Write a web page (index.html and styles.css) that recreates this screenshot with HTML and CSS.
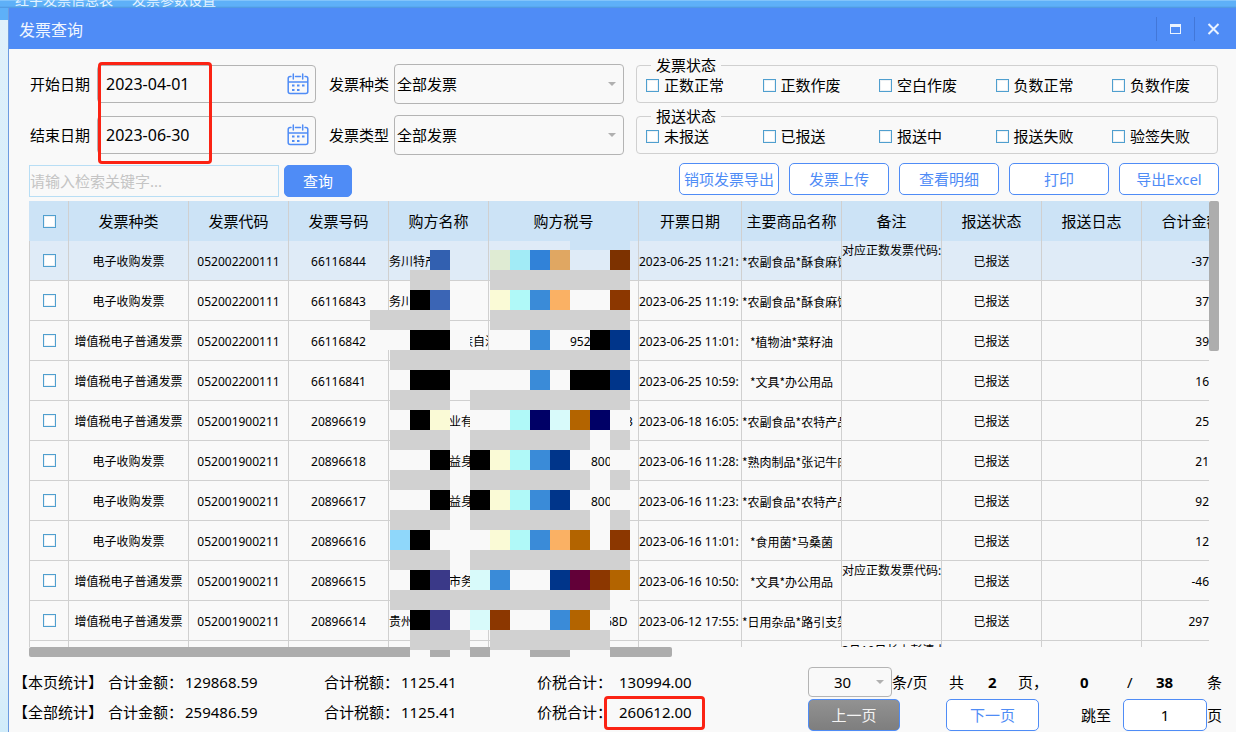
FILE: index.html
```html
<!DOCTYPE html>
<html lang="zh-CN">
<head>
<meta charset="utf-8">
<title>发票查询</title>
<link rel="stylesheet" href="styles.css">
</head>
<body>
<div class="desktop">
  <div class="backbar"><span>红字发票信息表</span><span>发票参数设置</span></div>
  <main class="window">
    <header class="titlebar">
      <h1>发票查询</h1>
      <button class="winbtn" aria-label="最大化"><svg width="13" height="12" viewBox="0 0 13 12"><rect x="1.5" y="1.500" width="10" height="9" fill="none" stroke="#eaf3ff"/><rect x="1" y="1" width="11" height="3" fill="#eaf3ff"/></svg></button>
      <button class="winbtn" aria-label="关闭"><svg width="13" height="12" viewBox="0 0 13 12"><path d="M1.500 1 11.500 11M11.500 1 1.500 11" stroke="#eaf3ff" stroke-width="2"/></svg></button>
    </header>

    <form class="filters">
      <label for="start">开始日期</label>
      <div class="datebox"><input id="start" type="text" value="2023-04-01"><svg class="cal" width="22" height="22" viewBox="0 0 22 22"><use href="#calendar"/></svg></div>
      <label class="second" for="kind">发票种类</label>
      <div class="pick"><select id="kind"><option>全部发票</option></select></div>
      <fieldset>
        <legend>发票状态</legend>
        <div class="checks">
          <label><input type="checkbox">正数正常</label>
          <label><input type="checkbox">正数作废</label>
          <label><input type="checkbox">空白作废</label>
          <label><input type="checkbox">负数正常</label>
          <label><input type="checkbox">负数作废</label>
        </div>
      </fieldset>
      <label for="end">结束日期</label>
      <div class="datebox"><input id="end" type="text" value="2023-06-30"><svg class="cal" width="22" height="22" viewBox="0 0 22 22"><use href="#calendar"/></svg></div>
      <label class="second" for="type">发票类型</label>
      <div class="pick"><select id="type"><option>全部发票</option></select></div>
      <fieldset>
        <legend>报送状态</legend>
        <div class="checks">
          <label><input type="checkbox">未报送</label>
          <label><input type="checkbox">已报送</label>
          <label><input type="checkbox">报送中</label>
          <label><input type="checkbox">报送失败</label>
          <label><input type="checkbox">验签失败</label>
        </div>
      </fieldset>
    </form>

    <div class="toolbar">
      <input class="search" type="text" placeholder="请输入检索关键字..." aria-label="检索关键字">
      <button class="btn primary">查询</button>
      <div class="actions">
        <button class="btn">销项发票导出</button>
        <button class="btn">发票上传</button>
        <button class="btn">查看明细</button>
        <button class="btn">打印</button>
        <button class="btn">导出Excel</button>
      </div>
    </div>

    <section class="grid">
      <div class="viewport">
        <table>
          <colgroup><col class="c40"><col class="c120"><col class="c100"><col class="c100"><col class="c100"><col class="c150"><col class="c103"><col class="c100"><col class="c100"><col class="c100"><col class="c100"><col class="c100"></colgroup>
          <thead>
            <tr><th><input type="checkbox" aria-label="全选"></th><th>发票种类</th><th>发票代码</th><th>发票号码</th><th>购方名称</th><th>购方税号</th><th>开票日期</th><th>主要商品名称</th><th>备注</th><th>报送状态</th><th>报送日志</th><th>合计金额</th></tr>
          </thead>
          <tbody>
            <tr class="selected"><td><input type="checkbox" aria-label="选择"></td><td>电子收购发票</td><td>052002200111</td><td>66116844</td><td class="start">务川特产</td><td></td><td class="start">2023-06-25 11:21:</td><td class="goods">*农副食品*酥食麻饼</td><td class="note">对应正数发票代码:0</td><td>已报送</td><td></td><td class="sum">-37</td></tr>
            <tr><td><input type="checkbox" aria-label="选择"></td><td>电子收购发票</td><td>052002200111</td><td>66116843</td><td class="start">务川</td><td></td><td class="start">2023-06-25 11:19:</td><td class="goods">*农副食品*酥食麻饼</td><td></td><td>已报送</td><td></td><td class="sum">37</td></tr>
            <tr><td><input type="checkbox" aria-label="选择"></td><td>增值税电子普通发票</td><td>052002200111</td><td>66116842</td><td class="start name-tail">族自治</td><td class="start tax-mid">952</td><td class="start">2023-06-25 11:01:</td><td class="goods">*植物油*菜籽油</td><td></td><td>已报送</td><td></td><td class="sum">39</td></tr>
            <tr><td><input type="checkbox" aria-label="选择"></td><td>增值税电子普通发票</td><td>052002200111</td><td>66116841</td><td></td><td></td><td class="start">2023-06-25 10:59:</td><td class="goods">*文具*办公用品</td><td></td><td>已报送</td><td></td><td class="sum">16</td></tr>
            <tr><td><input type="checkbox" aria-label="选择"></td><td>增值税电子普通发票</td><td>052001900211</td><td>20896619</td><td class="start name-mid">业有</td><td class="start tax-last">3</td><td class="start">2023-06-18 16:05:</td><td class="goods">*农副食品*农特产品</td><td></td><td>已报送</td><td></td><td class="sum">25</td></tr>
            <tr><td><input type="checkbox" aria-label="选择"></td><td>电子收购发票</td><td>052001900211</td><td>20896618</td><td class="start name-mid">益身</td><td class="start tax-late">800</td><td class="start">2023-06-16 11:28:</td><td class="goods">*熟肉制品*张记牛肉</td><td></td><td>已报送</td><td></td><td class="sum">21</td></tr>
            <tr><td><input type="checkbox" aria-label="选择"></td><td>电子收购发票</td><td>052001900211</td><td>20896617</td><td class="start name-mid">益身</td><td class="start tax-late">800</td><td class="start">2023-06-16 11:23:</td><td class="goods">*农副食品*农特产品</td><td></td><td>已报送</td><td></td><td class="sum">92</td></tr>
            <tr><td><input type="checkbox" aria-label="选择"></td><td>电子收购发票</td><td>052001900211</td><td>20896616</td><td></td><td></td><td class="start">2023-06-16 11:01:</td><td class="goods">*食用菌*马桑菌</td><td></td><td>已报送</td><td></td><td class="sum">12</td></tr>
            <tr><td><input type="checkbox" aria-label="选择"></td><td>增值税电子普通发票</td><td>052001900211</td><td>20896615</td><td class="start name-mid">市务</td><td></td><td class="start">2023-06-16 10:50:</td><td class="goods">*文具*办公用品</td><td class="note">对应正数发票代码:0</td><td>已报送</td><td></td><td class="sum">-46</td></tr>
            <tr><td><input type="checkbox" aria-label="选择"></td><td>增值税电子普通发票</td><td>052001900211</td><td>20896614</td><td class="start">贵州</td><td class="start tax-end">68D</td><td class="start">2023-06-12 17:55:</td><td class="goods">*日用杂品*路引支架</td><td></td><td>已报送</td><td></td><td class="sum">297</td></tr>
            <tr><td></td><td></td><td></td><td></td><td></td><td></td><td></td><td></td><td class="note">3月10日长上彭清上</td><td></td><td></td><td></td></tr>
          </tbody>
        </table>
      </div>
      <div class="vtrack"><div class="vthumb"></div></div>
      <div class="htrack"><div class="hthumb"></div></div>

      <svg class="mosaic" width="260" height="420" viewBox="370 240 260 420" shape-rendering="crispEdges" aria-hidden="true">
        <path fill="#cce3f6" d="M570 240h60v10h-60z"/>
        <path fill="#f9f9f9" d="M370 330h40v20h-40zM450 330h20v20h-20zM450 370h80v20h-80zM470 410h40v20h-40zM610 410h20v20h-20zM450 430h20v20h-20zM590 430h20v20h-20zM610 450h20v20h-20zM450 470h20v20h-20zM590 470h20v20h-20zM610 490h20v20h-20zM450 510h20v20h-20zM590 510h20v20h-20zM430 530h60v20h-60zM450 550h20v20h-20zM510 570h40v20h-40zM610 590h20v20h-20zM450 610h20v20h-20zM510 610h40v20h-40zM590 610h20v20h-20zM410 650h20v8h-20zM450 650h20v8h-20zM490 650h40v8h-40zM570 650h40v8h-40z"/>
        <path fill="#d1d1d1" d="M410 270h40v20h-40zM490 270h140v20h-140zM370 310h80v20h-80zM490 310h140v20h-140zM390 350h240v20h-240zM390 390h60v20h-60zM470 390h160v20h-160zM390 430h60v20h-60zM470 430h120v20h-120zM610 430h20v20h-20zM390 470h60v20h-60zM470 470h120v20h-120zM610 470h20v20h-20zM390 510h60v20h-60zM470 510h120v20h-120zM610 510h20v20h-20zM390 550h60v20h-60zM470 550h160v20h-160zM390 590h220v20h-220zM410 630h60v20h-60zM490 630h120v20h-120z"/>
        <path fill="#000" d="M410 290h20v20h-20zM410 330h40v20h-40zM590 330h20v20h-20zM410 370h40v20h-40zM570 370h40v20h-40zM410 410h20v20h-20zM430 450h20v20h-20zM470 450h20v20h-20zM430 490h20v20h-20zM470 490h20v20h-20zM410 530h20v20h-20zM410 570h20v20h-20zM410 610h20v20h-20z"/>
        <path fill="#3260b0" d="M430 250h20v20h-20z"/>
        <path fill="#dfebd3" d="M490 250h20v20h-20z"/>
        <path fill="#a2ebf6" d="M510 250h20v20h-20z"/>
        <path fill="#3182d8" d="M530 250h20v20h-20z"/>
        <path fill="#e0a762" d="M550 250h20v20h-20z"/>
        <path fill="#7d3200" d="M610 250h20v20h-20z"/>
        <path fill="#3b65b5" d="M430 290h20v20h-20z"/>
        <path fill="#fafad6" d="M490 290h20v20h-20zM430 410h20v20h-20zM490 450h20v20h-20zM490 490h20v20h-20zM490 530h20v20h-20z"/>
        <path fill="#b0f9f8" d="M510 290h20v20h-20zM510 410h20v20h-20zM510 450h20v20h-20zM510 490h20v20h-20zM510 530h20v20h-20z"/>
        <path fill="#3a8bd8" d="M530 290h20v20h-20zM530 330h20v20h-20zM530 370h20v20h-20zM530 450h20v20h-20zM530 490h20v20h-20zM530 530h20v20h-20zM490 570h20v20h-20zM550 610h20v20h-20z"/>
        <path fill="#fab164" d="M550 290h20v20h-20zM550 530h20v20h-20z"/>
        <path fill="#8c3700" d="M610 290h20v20h-20zM610 530h20v20h-20zM590 570h20v20h-20zM490 610h20v20h-20z"/>
        <path fill="#00358a" d="M610 330h20v20h-20zM610 370h20v20h-20zM550 450h20v20h-20zM550 490h20v20h-20zM550 570h20v20h-20z"/>
        <path fill="#000066" d="M530 410h20v20h-20zM590 410h20v20h-20z"/>
        <path fill="#d8fafa" d="M550 410h20v20h-20zM470 570h20v20h-20zM470 610h20v20h-20z"/>
        <path fill="#b36400" d="M570 410h20v20h-20zM570 530h20v20h-20zM610 570h20v20h-20zM570 610h20v20h-20z"/>
        <path fill="#8fd7fa" d="M390 530h20v20h-20z"/>
        <path fill="#3a3988" d="M430 570h20v20h-20zM430 610h20v20h-20z"/>
        <path fill="#620038" d="M570 570h20v20h-20z"/>
      </svg>
    </section>

    <footer class="footer">
      <div class="stats">
        <span>【本页统计】</span><span>合计金额：</span><span>129868.59</span><span>合计税额：</span><span>1125.41</span><span>价税合计：</span><span>130994.00</span>
        <span>【全部统计】</span><span>合计金额：</span><span>259486.59</span><span>合计税额：</span><span>1125.41</span><span>价税合计：</span><span class="marked">260612.00</span>
      </div>
      <div class="pager">
        <div class="counts">
          <div class="pick small"><select id="size" aria-label="每页条数"><option>30</option></select></div>
          <label for="size">条/页</label><span>共</span><b>2</b><span>页，</span><b>0</b><span>/</span><b>38</b><span>条</span>
        </div>
        <div class="jump">
          <button class="btn prev">上一页</button>
          <button class="btn next">下一页</button>
          <label for="page">跳至</label>
          <input id="page" type="text" value="1"><span>页</span>
        </div>
      </div>
    </footer>
    <div class="date-mark"></div>
  </main>
</div>

<svg width="0" height="0" class="defs">
  <symbol id="calendar" viewBox="0 0 22 22">
    <g fill="none" stroke="#4f8cf6" stroke-width="1.5" stroke-linecap="round">
      <path d="M4 3.5H3.2Q1.2 3.5 1.2 5.5V18.500Q1.200 20.500 3.200 20.500H18.800Q20.800 20.500 20.800 18.500V5.500Q20.800 3.500 18.800 3.500H18M8.500 3.500H13.500M1.500 9H20.500M6.300 1V6M15.700 1V6"/>
    </g>
    <g fill="#4f8cf6"><path d="M5 11.500h2.500v2H5zM10 11.500h2.500v2H10zM15 11.500h2.500v2H15zM5 16h2.500v2H5zM10 16h2.500v2H10z"/></g>
  </symbol>
</svg>
</body>
</html>
```
FILE: styles.css
```css
*,
*::after {
  box-sizing: border-box;
}

body {
  margin: 0;
  font-family: "Noto Sans", "Noto Sans CJK SC", sans-serif;
  font-size: 15px;
  line-height: 20px;
  color: #000;
}

input,
select,
button {
  margin: 0;
  padding: 0;
  font: inherit;
  color: inherit;
}

.desktop {
  display: flex;
  flex-direction: column;
  height: 100vh;
  overflow: hidden;
  padding-left: 8px;
  background: linear-gradient(#5eb0f8 0 20px, #e0f1fb 20px, #d6edfa 240px, #e0effa 660px, #d0ecfa 100%);
}

.backbar {
  display: flex;
  align-items: flex-end;
  gap: 19px;
  flex: none;
  height: 8px;
  margin-left: -8px;
  padding-left: 15px;
  overflow: hidden;
  background: linear-gradient(#82c4fb 0 1px, #5eb0f8 1px 6px, #4d94dc);
  color: #e4f3ff;
  font-size: 14px;
  line-height: 16px;
}

.window {
  position: relative;
  display: flex;
  flex: 1;
  flex-direction: column;
  min-height: 0;
  border-left: 1px solid #6c9be0;
  background: #f9f9f9;
}

.titlebar {
  display: flex;
  align-items: center;
  flex: none;
  height: 41px;
  padding: 0 4px 0 10px;
  background: #4f8cf6;
  color: #f0f6ff;
}

.titlebar h1 {
  flex: 1;
  margin: 0;
  padding-top: 2px;
  font-size: 16px;
  font-weight: 400;
}

.winbtn {
  display: flex;
  align-items: center;
  justify-content: center;
  width: 38px;
  height: 24px;
  border: 0;
  border-left: 1px solid #4277d8;
  background: none;
}

.filters {
  display: grid;
  grid-template-columns: 67px 219px 78px 230px 1fr;
  grid-auto-rows: 40px;
  row-gap: 11px;
  align-items: center;
  padding: 15px 18px 0 21px;
}

.second {
  padding-left: 13px;
}

.datebox {
  display: flex;
  align-items: center;
  height: 38px;
  padding: 0 6px 0 8px;
  border: 1px solid #b4b4b4;
  border-radius: 4px;
}

.datebox input {
  flex: 1;
  min-width: 0;
  border: 0;
  background: none;
  font-size: 16px;
}

.pick {
  position: relative;
  height: 40px;
}

.pick select {
  width: 100%;
  height: 100%;
  padding-left: 2px;
  border: 1px solid #b4b4b4;
  border-radius: 4px;
  background: #f9f9f9;
  appearance: none;
}

.pick::after {
  content: "";
  position: absolute;
  top: 18px;
  right: 8px;
  border: 4px solid transparent;
  border-top-color: #b0b0b0;
  pointer-events: none;
}

fieldset {
  align-self: start;
  min-width: 0;
  height: 48px;
  margin: -9px 0 0 12px;
  padding: 0 9px;
  border: 1px solid #d0d0d0;
  border-radius: 4px;
}

legend {
  height: 20px;
  margin-left: 5px;
  padding: 0 5px;
}

.checks {
  display: grid;
  grid-template-columns: repeat(4, 1fr) 96px;
}

.checks label {
  display: flex;
  align-items: center;
  gap: 5px;
}

input[type="checkbox"] {
  display: block;
  width: 13px;
  height: 13px;
  border: 1px solid #4f9fcf;
  background: #fff;
  box-shadow: inset 0 0 0 1px #edf1f4;
  appearance: none;
}

.toolbar {
  display: flex;
  align-items: flex-end;
  gap: 5px;
  height: 34px;
  margin-top: 8px;
  padding: 0 17px 0 20px;
}

.search {
  width: 250px;
  height: 32px;
  border: 1px solid #b8def5;
  background: #f9f9f9;
}

.search::placeholder {
  color: #c4c4c4;
}

.btn {
  width: 100px;
  height: 32px;
  border: 1px solid #4f8cf6;
  border-radius: 5px;
  background: #fff;
  color: #4f8cf6;
  white-space: nowrap;
}

.btn.primary {
  width: 68px;
  background: #4f8cf6;
  color: #fff;
}

.actions {
  display: flex;
  align-self: flex-start;
  gap: 10px;
  margin-left: auto;
}

.grid {
  position: relative;
  display: grid;
  flex: 1;
  grid-template-columns: 1fr 10px;
  grid-template-rows: 1fr 10px;
  min-height: 0;
  margin: 4px 17px 0 20px;
}

.viewport {
  min-width: 0;
  min-height: 0;
  overflow: hidden;
}

table {
  width: 1213px;
  table-layout: fixed;
  border-spacing: 0;
}

.c40 {
  width: 40px;
}

.c100 {
  width: 100px;
}

.c103 {
  width: 103px;
}

.c120 {
  width: 120px;
}

.c150 {
  width: 150px;
}

th,
td {
  height: 40px;
  padding: 0;
  overflow: hidden;
  border-right: 1px solid #d0d0d0;
  text-align: center;
  white-space: nowrap;
}

th {
  background: #cce3f6;
  font-weight: 400;
}

td {
  padding-top: 2px;
  border-bottom: 1px solid #d0d0d0;
  font-size: 12px;
}

th:first-child {
  border-left: 1px solid #cce3f6;
}

td:first-child {
  padding-top: 0;
  border-left: 1px solid #d0d0d0;
}

td input[type="checkbox"],
th input[type="checkbox"] {
  margin: 0 auto;
}

.selected td {
  background: #dfebf7;
}

td.start {
  text-align: left;
}

td.goods {
  font-family: "Noto Sans CJK SC", sans-serif;
}

td.note {
  padding-top: 0;
  text-align: left;
  vertical-align: top;
}

td.sum {
  padding-right: 32px;
  text-align: right;
}

td.name-mid {
  padding-left: 60px;
}

td.name-tail {
  padding-left: 72px;
}

td.tax-mid {
  padding-left: 81px;
}

td.tax-late {
  padding-left: 102px;
}

td.tax-end {
  padding-left: 116px;
}

td.tax-last {
  padding-left: 137px;
}

.vthumb {
  height: 150px;
  border-radius: 2px;
  background: #adadad;
}

.hthumb {
  width: 643px;
  height: 10px;
  border-radius: 2px;
  background: #adadad;
}

.mosaic {
  position: absolute;
  top: 39px;
  left: 341px;
}

.footer {
  display: flex;
  flex: none;
  justify-content: space-between;
  padding: 10px 14px 1px 4px;
}

.stats {
  display: grid;
  grid-template-columns: 95px 77px 139px 77px 136px 82px 90px;
  grid-auto-rows: 30px;
  align-items: center;
  white-space: nowrap;
}

.marked {
  position: relative;
}

.marked::after {
  content: "";
  position: absolute;
  top: -6px;
  left: -15px;
  width: 101px;
  height: 34px;
  border: 3px solid #fb2314;
  border-radius: 4px;
}

.pager {
  display: grid;
  row-gap: 2px;
  white-space: nowrap;
}

.counts {
  display: grid;
  grid-template-columns: 84px 57px 39px 30px 62px 47px 29px 51px 15px;
  align-items: center;
}

.pick.small {
  height: 30px;
}

.pick.small::after {
  top: 13px;
}

.pick.small select {
  padding-left: 25px;
}

.jump {
  display: flex;
  align-items: center;
}

.btn.prev {
  width: 92px;
  background: linear-gradient(#929292, #7e7e7e);
  color: #f4f4f4;
}

.btn.next {
  width: 93px;
  margin: 0 42px 0 46px;
}

.jump label {
  width: 42px;
}

.jump input {
  width: 84px;
  height: 32px;
  border: 1px solid #4f8cf6;
  border-radius: 5px;
  background: #fff;
  text-align: center;
}

.date-mark {
  position: absolute;
  top: 54px;
  left: 89px;
  width: 114px;
  height: 102px;
  border: 3px solid #fb2314;
  border-radius: 4px;
  pointer-events: none;
}

.defs {
  position: absolute;
}
```
